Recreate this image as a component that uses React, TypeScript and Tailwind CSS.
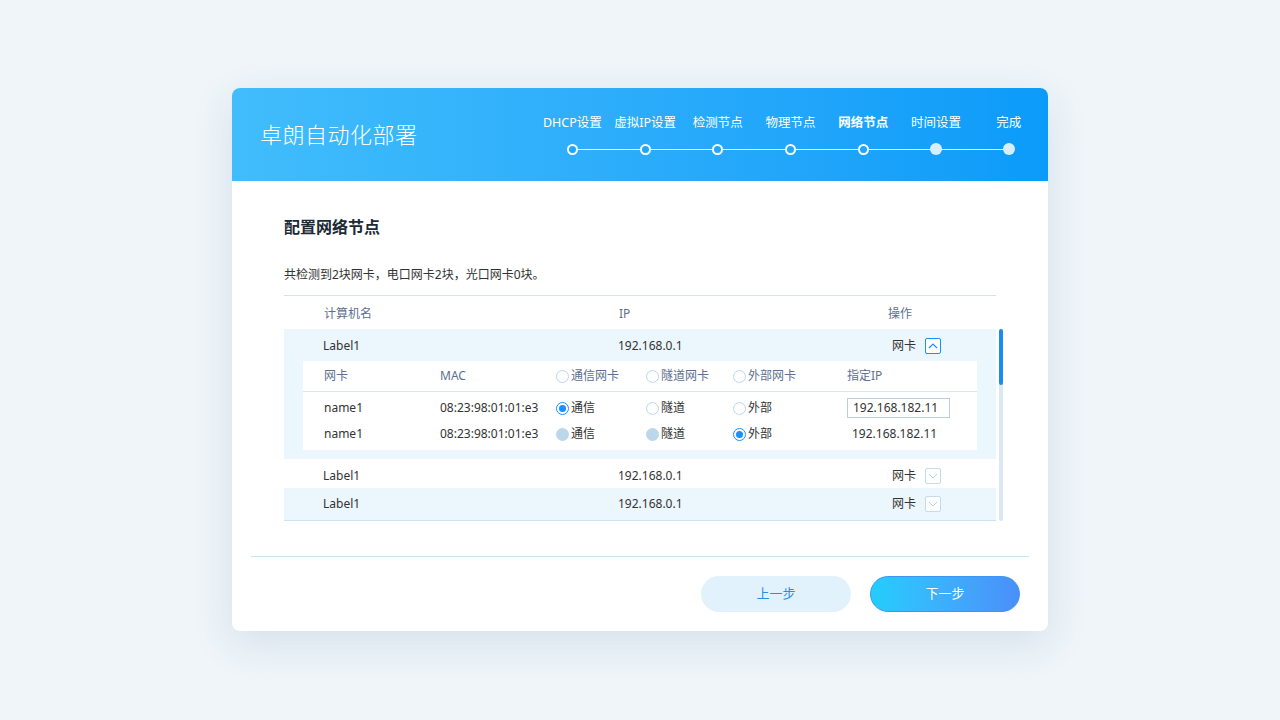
import React from 'react';

const steps = [
  { label: 'DHCP设置', done: true },
  { label: '虚拟IP设置', done: true },
  { label: '检测节点', done: true },
  { label: '物理节点', done: true },
  { label: '网络节点', done: true, current: true },
  { label: '时间设置', done: false },
  { label: '完成', done: false },
];

type RadioState = 'on' | 'off' | 'disabled';

const Radio: React.FC<{ state: RadioState; label: string; muted?: boolean }> = ({ state, label, muted }) => (
  <div className="flex items-center gap-[2px]">
    {state === 'on' && (
      <span className="w-[13px] h-[13px] rounded-full border border-[#1890ff] bg-white flex items-center justify-center">
        <span className="w-[7px] h-[7px] rounded-full bg-[#1890ff]" />
      </span>
    )}
    {state === 'off' && <span className="w-[13px] h-[13px] rounded-full border border-[#b8d8ee] bg-white" />}
    {state === 'disabled' && <span className="w-[13px] h-[13px] rounded-full bg-[#bcd7e9]" />}
    <span className={muted ? 'text-[#5d7090]' : 'text-[#333]'}>{label}</span>
  </div>
);

const Chevron: React.FC<{ up?: boolean }> = ({ up }) =>
  up ? (
    <span className="w-[16px] h-[16px] border border-[#1890ff] rounded-[2px] bg-white flex items-center justify-center">
      <svg width="12" height="12" viewBox="0 0 12 12" fill="none">
        <path d="M2 8L6 4L10 8" stroke="#1890ff" strokeWidth="1.2" />
      </svg>
    </span>
  ) : (
    <span className="w-[16px] h-[16px] border border-[#c2dced] rounded-[2px] bg-white flex items-center justify-center">
      <svg width="12" height="12" viewBox="0 0 12 12" fill="none">
        <path d="M2 4L6 8L10 4" stroke="#b4d3e7" strokeWidth="1" />
      </svg>
    </span>
  );

const nics = [
  { name: 'name1', mac: '08:23:98:01:01:e3', type: 'comm', input: true },
  { name: 'name1', mac: '08:23:98:01:01:e3', type: 'ext', input: false },
];

export default function App() {
  return (
    <div
      className="min-h-[720px] bg-[#eff5f9] flex justify-center pt-[88px]"
      style={{ fontFamily: '"Noto Sans", "Noto Sans CJK SC", sans-serif' }}
    >
      <div className="w-[816px] h-[543px] bg-white rounded-[8px] overflow-hidden shadow-[0_12px_40px_rgba(40,90,130,0.13)] flex flex-col">
        {/* header */}
        <div className="h-[93px] shrink-0 bg-linear-to-r from-[#41bdfc] to-[#0a9bf9] flex items-center pl-[28px] pr-[3px]">
          <div className="text-white text-[22px] font-light tracking-[0.5px]">卓朗自动化部署</div>
          <div className="ml-auto w-[509px] self-stretch flex flex-col">
            <div className="grid grid-cols-7 pt-[25px] h-[50px]">
              {steps.map((s) => (
                <div
                  key={s.label}
                  className={`text-center text-[12.5px] leading-[20px] text-white whitespace-nowrap ${s.current ? 'font-bold' : ''}`}
                >
                  {s.label}
                </div>
              ))}
            </div>
            <div className="relative grid grid-cols-7 mt-[5px] h-[12px]">
              <div className="absolute left-[36px] right-[36px] top-[5.5px] h-px bg-white" />
              {steps.map((s) => (
                <div key={s.label} className="flex justify-center items-center relative">
                  {s.done ? (
                    <span className="w-[11px] h-[11px] rounded-full border-2 border-white bg-[#1fa8fb]" />
                  ) : (
                    <span className="w-[12px] h-[12px] rounded-full bg-[#d7eefd]" />
                  )}
                </div>
              ))}
            </div>
          </div>
        </div>

        {/* body */}
        <div className="flex-1 pl-[52px] pt-[34px]">
          <div className="text-[16px] leading-[24px] font-bold text-[#1c2a36]">配置网络节点</div>
          <div className="mt-[27px] text-[12px] leading-[18px] text-[#333]">共检测到2块网卡，电口网卡2块，光口网卡0块。</div>

          <div className="mt-[11px] w-[719px] text-[12px]">
            <div className="w-[712px] border-t border-[#d3e3ee] h-[34px] flex items-center pt-[2px] pl-[40px] text-[#5d7090]">
              <div className="w-[295px]">计算机名</div>
              <div className="w-[269px]">IP</div>
              <div>操作</div>
            </div>

            <div className="flex">
              <div className="w-[712px] border-b border-[#cfe2ef]">
                {/* expanded row */}
                <div className="bg-[#ecf6fd] pb-[9px]">
                  <div className="h-[32px] flex items-center pl-[39px] pt-[1px] text-[#333]">
                    <div className="w-[295px]">Label1</div>
                    <div className="w-[274px]">192.168.0.1</div>
                    <div className="flex items-center gap-[9px]">
                      <span>网卡</span>
                      <Chevron up />
                    </div>
                  </div>
                  <div className="mx-[19px] bg-white pb-[3px]">
                    <div className="h-[31px] flex items-center pl-[21px] border-b border-[#d6e7f2] text-[#5d7090]">
                      <div className="w-[116px]">网卡</div>
                      <div className="w-[116px]">MAC</div>
                      <div className="w-[90px]"><Radio state="off" label="通信网卡" muted /></div>
                      <div className="w-[87px]"><Radio state="off" label="隧道网卡" muted /></div>
                      <div className="w-[114px]"><Radio state="off" label="外部网卡" muted /></div>
                      <div>指定IP</div>
                    </div>
                    <div className="pt-[3px]">
                      {nics.map((n, i) => (
                        <div key={i} className="h-[26px] flex items-center pl-[21px] text-[#333]">
                          <div className="w-[116px]">{n.name}</div>
                          <div className="w-[116px]">{n.mac}</div>
                          <div className="w-[90px]">
                            <Radio state={n.type === 'comm' ? 'on' : 'disabled'} label="通信" />
                          </div>
                          <div className="w-[87px]">
                            <Radio state={n.type === 'comm' ? 'off' : 'disabled'} label="隧道" />
                          </div>
                          <div className="w-[114px]">
                            <Radio state={n.type === 'ext' ? 'on' : 'off'} label="外部" />
                          </div>
                          {n.input ? (
                            <div className="w-[103px] h-[20px] border border-[#b9cfdf] flex items-center pl-[5px]">192.168.182.11</div>
                          ) : (
                            <div className="pl-[5px]">192.168.182.11</div>
                          )}
                        </div>
                      ))}
                    </div>
                  </div>
                </div>

                <div className="h-[29px] flex items-center pl-[39px] pt-[5px] text-[#333]">
                  <div className="w-[295px]">Label1</div>
                  <div className="w-[274px]">192.168.0.1</div>
                  <div className="flex items-center gap-[9px]">
                    <span>网卡</span>
                    <Chevron />
                  </div>
                </div>
                <div className="h-[32px] flex items-center pl-[39px] text-[#333] bg-[#ecf6fd]">
                  <div className="w-[295px]">Label1</div>
                  <div className="w-[274px]">192.168.0.1</div>
                  <div className="flex items-center gap-[9px]">
                    <span>网卡</span>
                    <Chevron />
                  </div>
                </div>
              </div>
              {/* scrollbar */}
              <div className="ml-[3px] w-[4px] rounded-full bg-[#dbe8f1] flex flex-col">
                <div className="h-[56px] rounded-full bg-[#1a8cf0]" />
              </div>
            </div>
          </div>
        </div>

        {/* footer */}
        <div className="mx-[19px] border-t border-[#c8e1f1] pt-[19px] pb-[19px] pr-[9px] flex justify-end gap-[19px]">
          <button className="w-[150px] h-[36px] rounded-full bg-[#e2f2fd] text-[#2a8ee6] text-[13px]">上一步</button>
          <button className="w-[150px] h-[36px] rounded-full bg-linear-to-r from-[#22cdfd] to-[#4a8ff9] border border-[#3d96f3] text-white text-[13px]">
            下一步
          </button>
        </div>
      </div>
    </div>
  );
}
